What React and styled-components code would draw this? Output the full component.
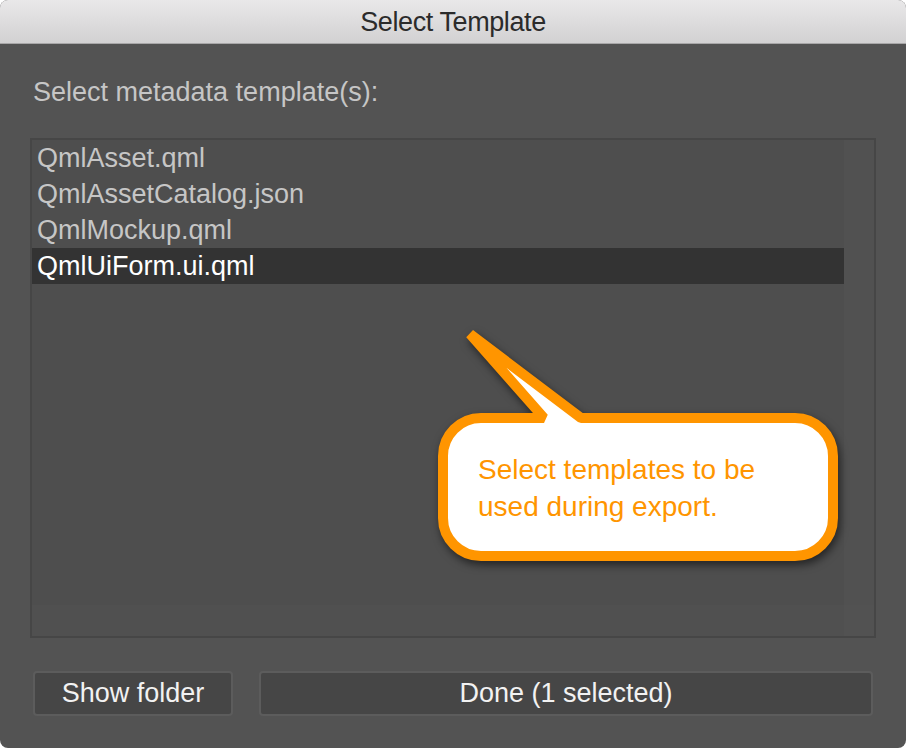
import styled, { createGlobalStyle } from 'styled-components'

const GlobalStyle = createGlobalStyle`
  html, body {
    margin: 0;
    padding: 0;
    background: #ffffff;
  }
  * {
    box-sizing: border-box;
  }
`

const templates = [
  'QmlAsset.qml',
  'QmlAssetCatalog.json',
  'QmlMockup.qml',
  'QmlUiForm.ui.qml'
]

const App = () => {
  return (
    <>
      <GlobalStyle />
      <Window>
        <TitleBar>Select Template</TitleBar>
        <Content>
          <Label>Select metadata template(s):</Label>
          <ListBox>
            <ListArea>
              {templates.map((name, key) => (
                <Row key={key} selected={key === 3}>
                  {name}
                </Row>
              ))}
            </ListArea>
            <VScroll />
            <HScroll />
            <Corner />
          </ListBox>
          <Footer>
            <Button>Show folder</Button>
            <Button wide>Done (1 selected)</Button>
          </Footer>
        </Content>
        <Callout>
          <svg width='420' height='260' viewBox='430 320 420 260'>
            <path
              d='M 481 418 L 544 418 L 470 334 L 581 418 L 795 418 A 38 38 0 0 1 833 456 L 833 518 A 38 38 0 0 1 795 556 L 481 556 A 38 38 0 0 1 443 518 L 443 456 A 38 38 0 0 1 481 418 Z'
              fill='#ffffff'
              stroke='#ff9500'
              strokeWidth='10'
              strokeLinejoin='bevel'
            />
          </svg>
          <CalloutText>
            Select templates to be
            <br />
            used during export.
          </CalloutText>
        </Callout>
      </Window>
    </>
  )
}

const Window = styled.div`
  position: relative;
  width: 906px;
  height: 748px;
  border-radius: 8px;
  overflow: hidden;
  background: #535353;
  display: flex;
  flex-direction: column;
  font-family: 'Liberation Sans', Arial, sans-serif;
`

const TitleBar = styled.div`
  height: 44px;
  flex: none;
  display: flex;
  align-items: center;
  justify-content: center;
  padding-top: 2px;
  background: linear-gradient(#e9e8e9, #d2d1d2);
  border-bottom: 1px solid #a8a7a8;
  color: #2b2b2b;
  font-size: 27px;
  letter-spacing: -0.4px;
`

const Content = styled.div`
  flex: 1;
  display: flex;
  flex-direction: column;
  padding: 0 30px;
`

const Label = styled.div`
  margin: 35px 0 0 3px;
  height: 26px;
  line-height: 26px;
  color: #c6c6c6;
  font-size: 27px;
`

const ListBox = styled.div`
  margin-top: 33px;
  height: 500px;
  border: 2px solid #464646;
  display: grid;
  grid-template-columns: 1fr 30px;
  grid-template-rows: 1fr 31px;
  background: #4e4e4e;
`

const ListArea = styled.div`
  display: flex;
  flex-direction: column;
`

const VScroll = styled.div`
  background: #515151;
`

const HScroll = styled.div`
  background: #505050;
`

const Corner = styled.div`
  background: #525252;
`

const Row = styled.div`
  height: 36px;
  line-height: 36px;
  padding-left: 5px;
  font-size: 27px;
  white-space: nowrap;
  color: ${({ selected }) => (selected ? '#ffffff' : '#c6c6c6')};
  background: ${({ selected }) => (selected ? '#333333' : 'transparent')};
`

const Footer = styled.div`
  margin: 33px 3px 0;
  display: flex;
  gap: 26px;
`

const Button = styled.div`
  flex: ${({ wide }) => (wide ? '1' : 'none')};
  width: ${({ wide }) => (wide ? 'auto' : '200px')};
  height: 45px;
  display: flex;
  align-items: center;
  justify-content: center;
  background: #464646;
  border: 2px solid #5c5c5c;
  border-radius: 4px;
  color: #f2f2f2;
  font-size: 27px;
  letter-spacing: 0;
`

const Callout = styled.div`
  position: absolute;
  left: 430px;
  top: 320px;
  width: 420px;
  height: 260px;

  svg {
    display: block;
    filter: drop-shadow(2px 4px 4px rgba(0, 0, 0, 0.55));
  }
`

const CalloutText = styled.div`
  position: absolute;
  left: 48px;
  top: 131px;
  color: #ff9500;
  font-size: 28px;
  line-height: 37px;
`

export default App
